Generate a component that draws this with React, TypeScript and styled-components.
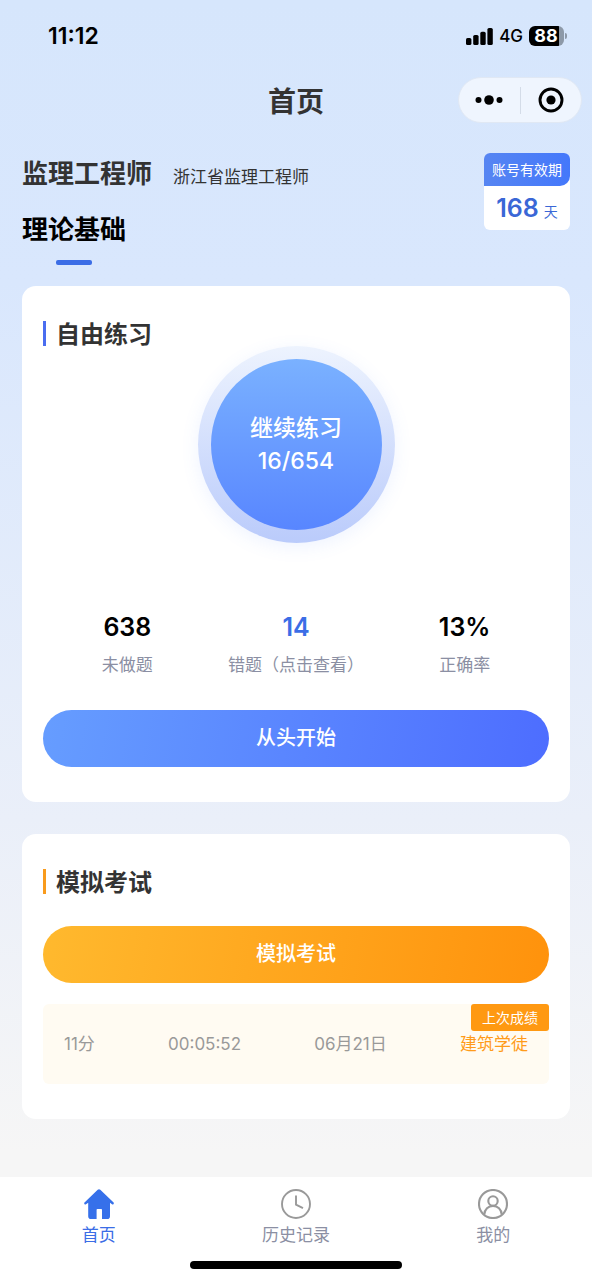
import React from "react";
import styled, { createGlobalStyle } from "styled-components";

const GlobalStyle = createGlobalStyle`
  * { box-sizing: border-box; }
  body {
    margin: 0;
    font-family: Inter, "Noto Sans CJK SC", sans-serif;
    color: #333;
  }
  button {
    border: 0;
    padding: 0;
    background: none;
    font-family: inherit;
    color: inherit;
    cursor: pointer;
  }
  a { color: inherit; text-decoration: none; }
  h1, h2, p { margin: 0; }
`;

const Page = styled.div`
  display: flex;
  flex-direction: column;
  min-height: 100vh;
  background: linear-gradient(180deg, #d6e6fc 0%, #d9e7fd 22%, #eaeff9 64%, #f6f6f6 90%);
`;

const StatusBar = styled.div`
  display: flex;
  align-items: center;
  justify-content: space-between;
  height: 72px;
  padding: 0 25px 0 48px;
  color: #000;
`;

const Clock = styled.time`
  font-size: 23px;
  font-weight: 600;
  line-height: 28px;
`;

const StatusIcons = styled.div`
  display: flex;
  align-items: center;
  gap: 6px;
  font-size: 17px;
  font-weight: 500;
  line-height: 20px;
`;

const BatteryGroup = styled.div`
  display: flex;
  align-items: center;
  gap: 1px;
`;

const BatteryBody = styled.span`
  width: 35px;
  height: 20px;
  padding-right: 1px;
  border-radius: 6px;
  background: linear-gradient(90deg, #000 30px, #8d99a8 30px);
  color: #fff;
  font-size: 18px;
  font-weight: 700;
  text-align: center;
`;

const BatteryTip = styled.span`
  width: 2px;
  height: 6px;
  border-radius: 0 2px 2px 0;
  background: #8d99a8;
`;

const TitleBar = styled.header`
  display: grid;
  grid-template-columns: 1fr auto 1fr;
  align-items: center;
  height: 56px;
  padding: 0 10px;
`;

const PageTitle = styled.h1`
  grid-column: 2;
  padding-top: 4px;
  font-size: 28px;
  font-weight: 700;
  line-height: 40px;
`;

const Capsule = styled.div`
  display: flex;
  align-items: center;
  justify-self: end;
  width: 124px;
  height: 46px;
  border: 1px solid #e0e8f4;
  border-radius: 23px;
  background: #eff5fe;
  color: #000;
`;

const CapsuleButton = styled.button`
  display: flex;
  flex: 1;
  align-items: center;
  justify-content: center;
  height: 100%;
`;

const CapsuleDivider = styled.span`
  width: 1px;
  height: 27px;
  background: #d4dce8;
`;

const Intro = styled.section`
  display: flex;
  justify-content: space-between;
  align-items: flex-start;
  padding: 25px 22px 0;
`;

const CourseLine = styled.div`
  display: flex;
  align-items: baseline;
  gap: 21px;
`;

const Course = styled.p`
  font-size: 26px;
  font-weight: 700;
  line-height: 42px;
`;

const Region = styled.p`
  font-size: 17px;
  line-height: 38px;
`;

const SubjectTab = styled.button`
  display: flex;
  flex-direction: column;
  align-items: center;
  gap: 11px;
  margin-top: 15px;
  color: #000;
  font-size: 26px;
  font-weight: 700;
  line-height: 38px;

  &::after {
    content: "";
    width: 36px;
    height: 5px;
    border-radius: 2px;
    background: #3b6de6;
  }
`;

const Validity = styled.aside`
  width: 86px;
  border-radius: 6px;
  background: #fff;
  overflow: hidden;
  text-align: center;
`;

const ValidityLabel = styled.p`
  height: 33px;
  border-radius: 0 0 10px 0;
  background: linear-gradient(90deg, #5685f2, #4478fb);
  color: #fff;
  font-size: 14px;
  line-height: 33px;
`;

const ValidityValue = styled.p`
  display: flex;
  align-items: baseline;
  justify-content: center;
  gap: 5px;
  height: 44px;
  color: #3a67d6;
  font-size: 14px;
  line-height: 44px;

  strong {
    font-size: 25px;
    font-weight: 600;
  }
`;

const Main = styled.main`
  display: flex;
  flex: 1;
  flex-direction: column;
  gap: 32px;
  padding: 21px 22px 57px;
`;

const Card = styled.section`
  padding: 31px 21px 35px;
  border-radius: 14px;
  background: #fff;
`;

const CardTitle = styled.h2<{ $accent: string }>`
  display: flex;
  align-items: center;
  gap: 10px;
  font-size: 24px;
  font-weight: 700;
  line-height: 36px;

  &::before {
    content: "";
    width: 3px;
    height: 25px;
    margin-bottom: 4px;
    background: ${(p) => p.$accent};
  }
`;

const Ring = styled.div`
  width: 197px;
  margin: -7px auto 0;
  padding: 13px;
  border-radius: 50%;
  background: linear-gradient(180deg, #edf3fe, #bacbfb);
  box-shadow: 0 4px 18px rgba(90, 135, 255, 0.1);
`;

const ContinueButton = styled.button`
  display: block;
  width: 100%;
  aspect-ratio: 1;
  border-radius: 50%;
  background: linear-gradient(180deg, #7ab1ff, #5886ff);
  color: #fff;
  font-size: 23px;
  font-weight: 500;
  line-height: 33px;

  span { display: block; }
`;

const Stats = styled.div`
  display: grid;
  grid-template-columns: repeat(3, 1fr);
  margin: 64px 0 32px;
`;

const Stat = styled.button<{ $color?: string }>`
  display: flex;
  flex-direction: column;
  align-items: center;
  gap: 5px;
  color: #8b8fa3;
  font-size: 17px;
  line-height: 26px;
  white-space: nowrap;

  strong {
    color: ${(p) => p.$color ?? "#000"};
    font-size: 25px;
    font-weight: 600;
    line-height: 40px;
  }
`;

const PillButton = styled.button<{ $from: string; $to: string }>`
  display: block;
  width: 100%;
  height: 57px;
  border-radius: 29px;
  background: linear-gradient(100deg, ${(p) => p.$from}, ${(p) => p.$to});
  color: #fff;
  font-size: 20px;
  font-weight: 500;
  line-height: 55px;
`;

const ExamButton = styled(PillButton)`
  margin: 25px 0 21px;
`;

const LastExam = styled.div`
  position: relative;
  display: flex;
  align-items: center;
  justify-content: space-between;
  height: 80px;
  padding: 0 21px;
  border-radius: 6px;
  background: #fffbf2;
  color: #999;
  font-size: 17px;
  line-height: 26px;
`;

const Rank = styled.span`
  color: #ff9b1a;
`;

const LastBadge = styled.span`
  position: absolute;
  top: 0;
  right: 0;
  padding: 0 11px;
  border-radius: 3px;
  background: #ff9912;
  color: #fff;
  font-size: 14px;
  line-height: 27px;
`;

const Footer = styled.footer`
  background: #fff;
`;

const TabBar = styled.nav`
  display: grid;
  grid-template-columns: repeat(3, 1fr);
  padding-top: 12px;
`;

const TabLink = styled.a<{ $active?: boolean }>`
  display: flex;
  flex-direction: column;
  align-items: center;
  gap: 3px;
  color: ${(p) => (p.$active ? "#3b6de6" : "#8b8fa3")};
  font-size: 17px;
  line-height: 26px;
`;

const HomeIndicator = styled.div`
  width: 212px;
  height: 8px;
  margin: 13px auto 11px;
  border-radius: 4px;
  background: #000;
`;

const SignalIcon = () => (
  <svg width="27" height="17" viewBox="0 0 27 17" aria-hidden="true">
    <rect x="0" y="10" width="5.4" height="7" rx="1.6" />
    <rect x="7.2" y="7" width="5.4" height="10" rx="1.6" />
    <rect x="14.3" y="3.8" width="5.4" height="13.2" rx="1.6" />
    <rect x="21.4" y="0" width="5.4" height="17" rx="1.6" />
  </svg>
);

const MoreIcon = () => (
  <svg width="28" height="10" viewBox="0 0 28 10" aria-hidden="true">
    <circle cx="3.5" cy="5" r="3" />
    <circle cx="14" cy="5" r="4.8" />
    <circle cx="24.5" cy="5" r="3" />
  </svg>
);

const TargetIcon = () => (
  <svg width="26" height="26" viewBox="0 0 26 26" aria-hidden="true">
    <circle cx="13" cy="13" r="11" fill="none" stroke="#000" strokeWidth="2.9" />
    <circle cx="13" cy="13" r="4.6" />
  </svg>
);

const HomeIcon = () => (
  <svg width="30" height="30" viewBox="0 0 30 30" fill="#3670ea" aria-hidden="true">
    <path d="M13.7.8Q15-.4 16.3.8L29.6 13.6Q30.2 14.3 29.4 15.2 28.8 15.8 28 15.2L26 13.8V27.2Q26 30 23.2 30H18V20.8Q18 20 17.2 20H13.4Q12.6 20 12.6 20.8V30H7Q4.2 30 4.2 27.2V13.8L2 15.2Q1.2 15.8.6 15.2-.2 14.3.5 13.6Z" />
  </svg>
);

const HistoryIcon = () => (
  <svg width="30" height="30" viewBox="0 0 30 30" fill="none" stroke="#999" strokeWidth="1.9" aria-hidden="true">
    <circle cx="15" cy="15" r="14" />
    <path d="M15 6.5V15.6L22 19.2" />
  </svg>
);

const ProfileIcon = () => (
  <svg width="30" height="30" viewBox="0 0 30 30" fill="none" stroke="#999" strokeWidth="2.1" aria-hidden="true">
    <circle cx="15" cy="15" r="14" />
    <circle cx="15" cy="12" r="4.7" />
    <path d="M6.2 25.6C6.6 20.4 10.3 16.9 15 16.9S23.4 20.4 23.8 25.6" />
  </svg>
);

export default function App() {
  return (
    <Page>
      <GlobalStyle />
      <StatusBar>
        <Clock>11:12</Clock>
        <StatusIcons>
          <SignalIcon />
          <span>4G</span>
          <BatteryGroup>
            <BatteryBody>88</BatteryBody>
            <BatteryTip />
          </BatteryGroup>
        </StatusIcons>
      </StatusBar>

      <TitleBar>
        <PageTitle>首页</PageTitle>
        <Capsule>
          <CapsuleButton aria-label="更多">
            <MoreIcon />
          </CapsuleButton>
          <CapsuleDivider />
          <CapsuleButton aria-label="关闭">
            <TargetIcon />
          </CapsuleButton>
        </Capsule>
      </TitleBar>

      <Intro>
        <div>
          <CourseLine>
            <Course>监理工程师</Course>
            <Region>浙江省监理工程师</Region>
          </CourseLine>
          <SubjectTab>理论基础</SubjectTab>
        </div>
        <Validity>
          <ValidityLabel>账号有效期</ValidityLabel>
          <ValidityValue>
            <strong>168</strong>天
          </ValidityValue>
        </Validity>
      </Intro>

      <Main>
        <Card>
          <CardTitle $accent="#4a6df0">自由练习</CardTitle>
          <Ring>
            <ContinueButton>
              <span>继续练习</span>
              <span>16/654</span>
            </ContinueButton>
          </Ring>
          <Stats>
            <Stat as="div">
              <strong>638</strong>未做题
            </Stat>
            <Stat $color="#3b6de6">
              <strong>14</strong>错题（点击查看）
            </Stat>
            <Stat as="div">
              <strong>13%</strong>正确率
            </Stat>
          </Stats>
          <PillButton $from="#669dff" $to="#4d6dff">从头开始</PillButton>
        </Card>

        <Card>
          <CardTitle $accent="#f99b1c">模拟考试</CardTitle>
          <ExamButton $from="#ffb92e" $to="#ff920c">模拟考试</ExamButton>
          <LastExam>
            <span>11分</span>
            <span>00:05:52</span>
            <span>06月21日</span>
            <Rank>建筑学徒</Rank>
            <LastBadge>上次成绩</LastBadge>
          </LastExam>
        </Card>
      </Main>

      <Footer>
        <TabBar>
          <TabLink href="#home" $active aria-current="page">
            <HomeIcon />
            首页
          </TabLink>
          <TabLink href="#history">
            <HistoryIcon />
            历史记录
          </TabLink>
          <TabLink href="#profile">
            <ProfileIcon />
            我的
          </TabLink>
        </TabBar>
        <HomeIndicator />
      </Footer>
    </Page>
  );
}
